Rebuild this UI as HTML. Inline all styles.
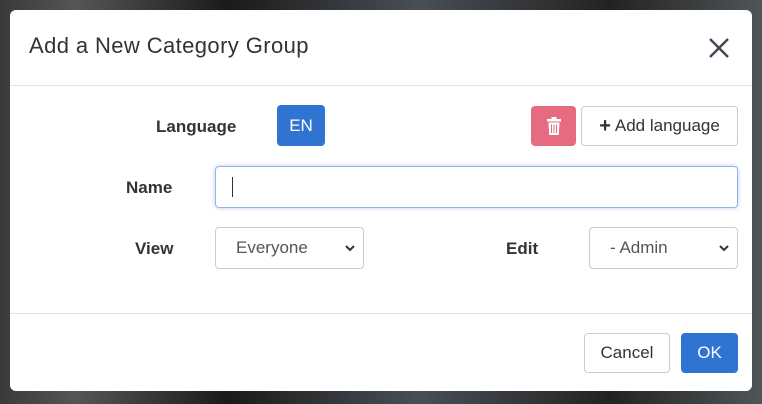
<!DOCTYPE html><html><head><style>
body{margin:0;width:762px;height:404px;overflow:hidden;background:#2e2e2e;font-family:"Liberation Sans",sans-serif;position:relative}
.bg1{position:absolute;left:0;top:0;width:762px;height:404px;background:linear-gradient(90deg,#3a3a3a 0,#555 10%,#1a1a1a 30%,#4a4f55 55%,#222 80%,#505558 100%)}
.m{position:absolute;left:10px;top:10px;width:742px;height:381px;background:#fff;border-radius:6px}
.a{position:absolute}
.t{left:19px;top:23px;font-size:22px;color:#333;letter-spacing:0.4px}
.hl{left:0;width:742px;height:1px;background:#e2e2e2}
.lb{font-weight:bold;font-size:17px;color:#333}
.btn{box-sizing:border-box;border-radius:4px;font-size:16px;display:flex;align-items:center;justify-content:center}
.sel{box-sizing:border-box;border:1px solid #ccc;border-radius:4px;height:42px;font-size:17px;color:#555;padding-left:20px;display:flex;align-items:center}
.sel svg{position:absolute;right:8px;top:16px}
</style></head><body><div class="bg1"></div>
<div class="m">
<div class="a t">Add a New Category Group</div>
<svg class="a" style="left:698px;top:27px" width="22" height="22" viewBox="0 0 22 22"><path d="M2 2L20 20M20 2L2 20" stroke="#3f4a57" stroke-width="2.5"/></svg>
<div class="a hl" style="top:75px"></div>
<div class="a lb" style="left:146px;top:107px">Language</div>
<div class="a btn" style="left:267px;top:95px;width:48px;height:41px;background:#2f74d0;color:#fff;font-size:17px">EN</div>
<div class="a btn" style="left:521px;top:96px;width:45px;height:40px;background:#e66b80">
<svg width="14" height="18" viewBox="0 0 14 18"><rect x="0" y="2" width="14" height="2.5" fill="#fff"/><rect x="4.5" y="0" width="5" height="2.5" fill="#fff"/><path d="M1.5 5.5H12.5L11.8 18H2.2Z" fill="#fff"/><path d="M4.5 7.5V16M7 7.5V16M9.5 7.5V16" stroke="#e66b80" stroke-width="1"/></svg></div>
<div class="a btn" style="left:571px;top:96px;width:157px;height:40px;border:1px solid #ccc;color:#333;font-size:17px"><b style="font-size:20px;margin-right:4px">+</b>Add language</div>
<div class="a lb" style="left:116px;top:168px">Name</div>
<div class="a" style="left:205px;top:156px;width:523px;height:42px;box-sizing:border-box;border:1px solid #8fb6e8;border-radius:4px;box-shadow:0 0 4px rgba(47,116,208,.35)"><div class="a" style="left:16px;top:10px;width:1px;height:20px;background:#333"></div></div>
<div class="a lb" style="left:125px;top:229px">View</div>
<div class="a sel" style="left:205px;top:217px;width:149px">Everyone<svg width="10" height="8" viewBox="0 0 10 8"><path d="M1 2L5 6L9 2" stroke="#333" stroke-width="2" fill="none"/></svg></div>
<div class="a lb" style="left:496px;top:229px">Edit</div>
<div class="a sel" style="left:579px;top:217px;width:149px">- Admin<svg width="10" height="8" viewBox="0 0 10 8"><path d="M1 2L5 6L9 2" stroke="#333" stroke-width="2" fill="none"/></svg></div>
<div class="a hl" style="top:303px"></div>
<div class="a btn" style="left:574px;top:323px;width:86px;height:40px;border:1px solid #ccc;color:#333;font-size:17px">Cancel</div>
<div class="a btn" style="left:671px;top:323px;width:57px;height:40px;background:#2f74d0;color:#fff;font-size:17px">OK</div>
</div>
</body></html>
